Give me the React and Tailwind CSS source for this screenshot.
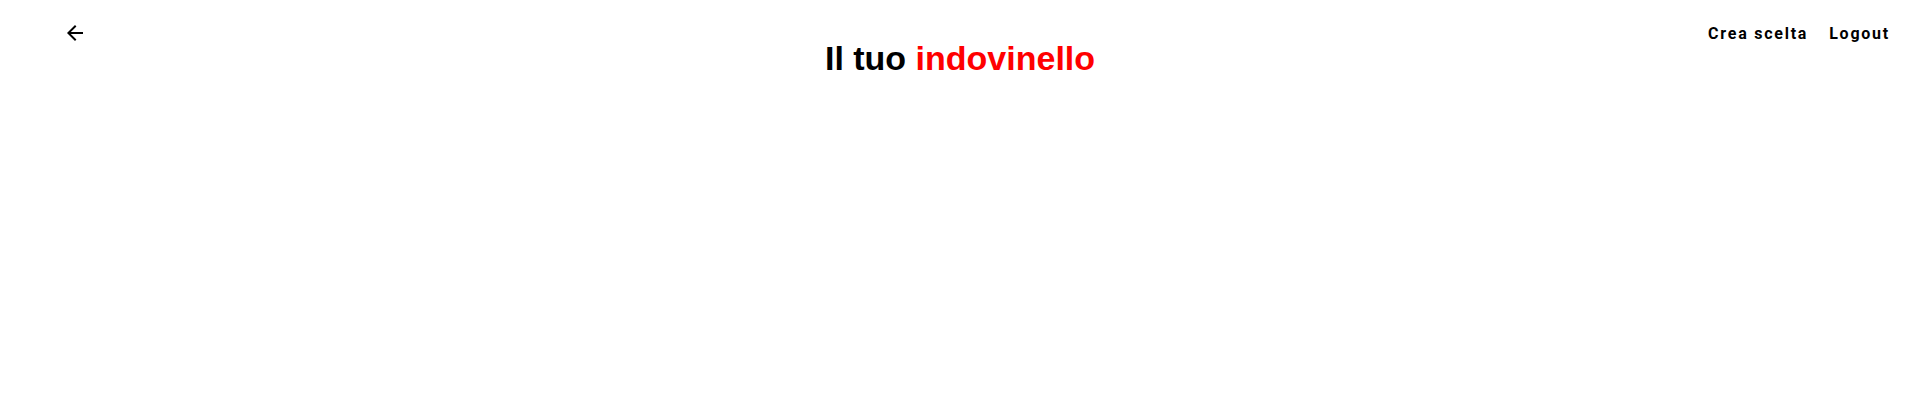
import { MdArrowBack } from "react-icons/md";

export default function App() {
  return (
    <div className="min-h-screen bg-white">
      {/* Header */}
      <header className="grid grid-cols-[1fr_auto_1fr] items-start pt-[21px] px-[28px]">
        <div className="flex h-6 items-center pl-[35px]">
          <button className="flex h-6 w-6 items-center justify-center text-black">
            <MdArrowBack size={24} />
          </button>
        </div>

        <h1 className="mt-[17px] ml-[2px] whitespace-nowrap text-[34px] leading-[40px] font-bold text-black font-['Liberation_Sans',Arial,sans-serif]">
          Il tuo <span className="text-[#ff0000]">indovinello</span>
        </h1>

        <nav className="mt-px flex h-6 items-center justify-end gap-[21px] font-['Roboto',sans-serif] text-base leading-6 font-bold tracking-[0.11em] text-black">
          <a href="#">Crea scelta</a>
          <a href="#">Logout</a>
        </nav>
      </header>
    </div>
  );
}
